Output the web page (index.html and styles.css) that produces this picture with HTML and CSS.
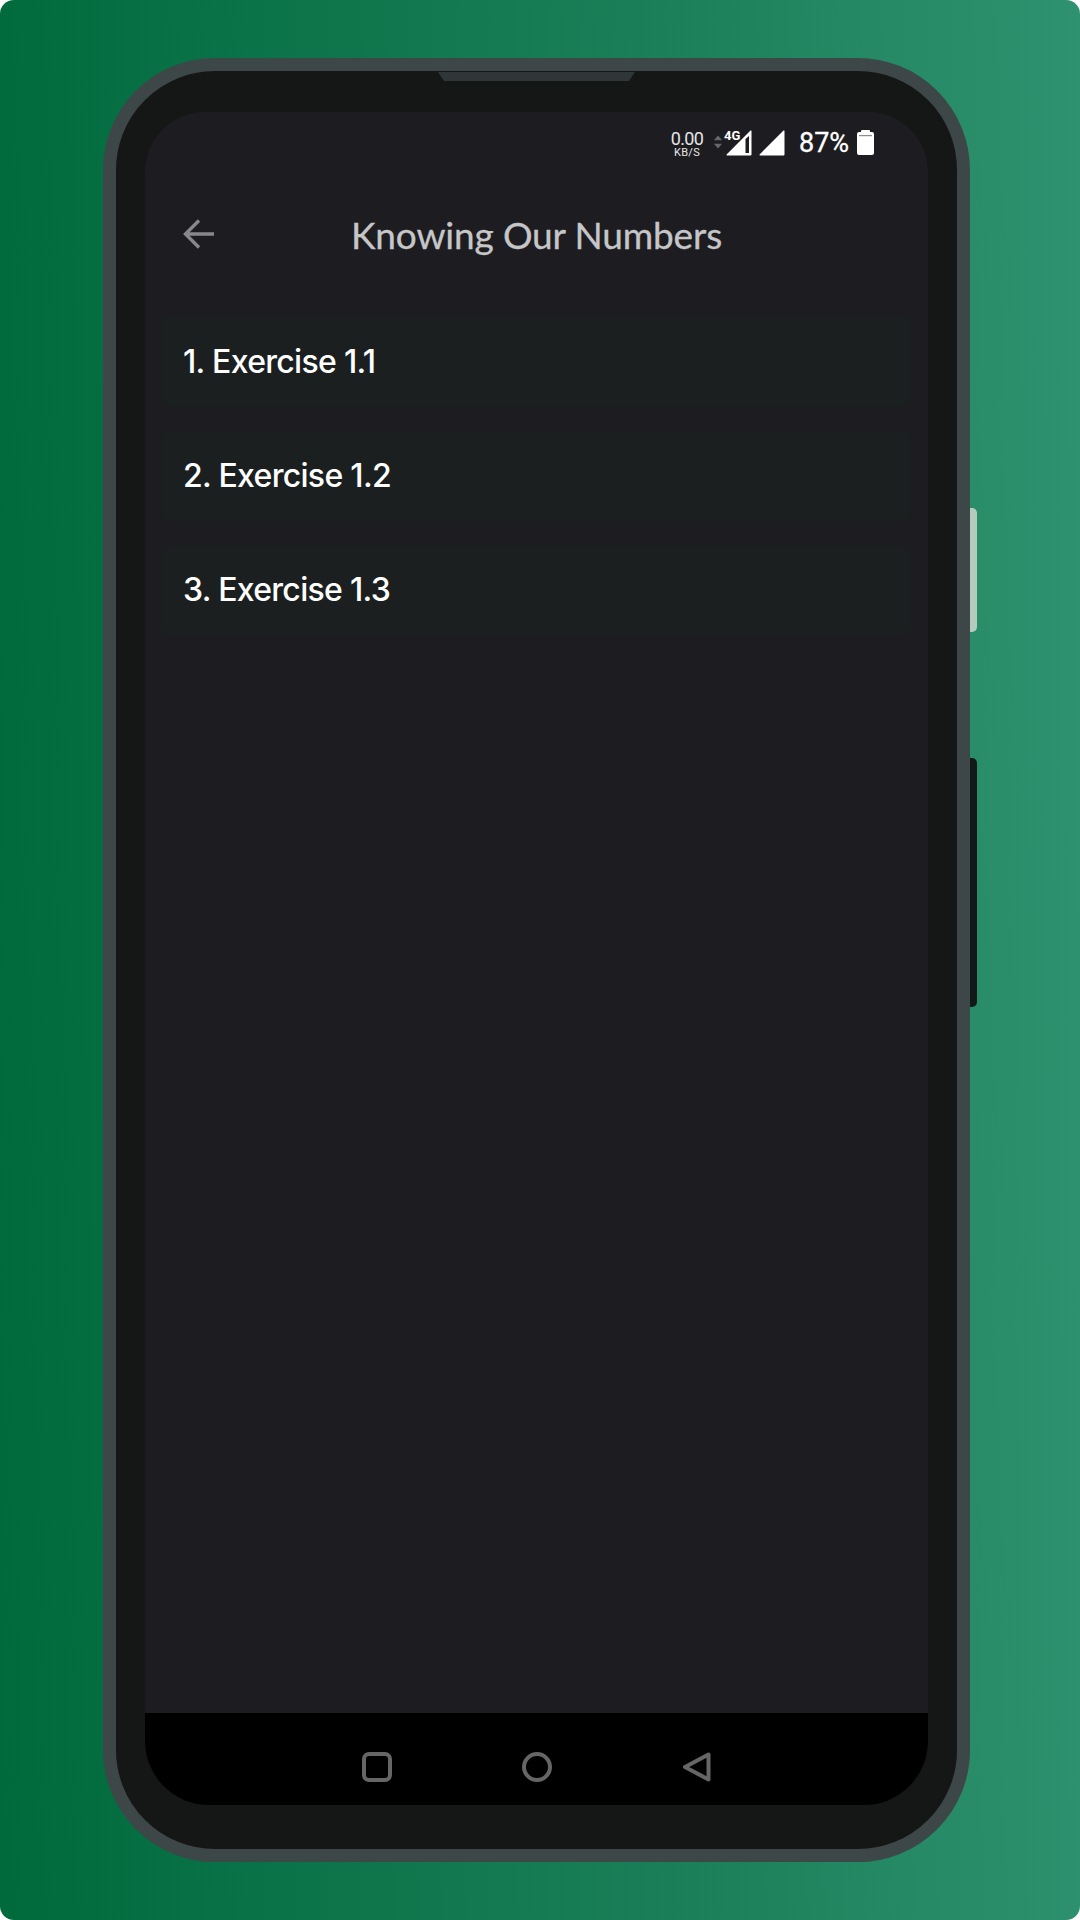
FILE: index.html
```html
<!DOCTYPE html>
<html lang="en">
<head>
<meta charset="utf-8">
<title>Knowing Our Numbers</title>
<link rel="stylesheet" href="styles.css">
</head>
<body>
<main class="stage">
  <div class="phone">
    <span class="notch"></span>
    <span class="btn btn-vol"></span>
    <span class="btn btn-power"></span>
    <div class="screen">
      <div class="status">
        <div class="speed"><span class="speed-val">0.00</span><span class="speed-unit">KB/S</span></div>
        <svg class="arrows" viewBox="0 0 8 12"><path d="M4 0.5 7.5 4.5H.5zM4 11.5 .5 7.5H7.5z" fill="#66676b"/></svg>
        <div class="sig-4g">
          <span class="tag-4g">4G</span>
          <svg class="sig" viewBox="0 0 26 26"><path fill-rule="evenodd" d="M25.5 1V24.5a1 1 0 0 1-1 1H1a.6.6 0 0 1-.4-1L24.5.6a.6.6 0 0 1 1 .4zM19.5 9V23H23V6z" fill="#fff"/></svg>
        </div>
        <svg class="sig sig-b" viewBox="0 0 26 26"><path d="M25.5 1V24.5a1 1 0 0 1-1 1H1a.6.6 0 0 1-.4-1L24.5.6a.6.6 0 0 1 1 .4z" fill="#fff"/></svg>
        <span class="pct">87%</span>
        <svg class="batt" viewBox="0 0 17 25"><path d="M5 0h7a1 1 0 0 1 1 1v1h2a2 2 0 0 1 2 2v19a2 2 0 0 1-2 2H2a2 2 0 0 1-2-2V4a2 2 0 0 1 2-2h2V1a1 1 0 0 1 1-1z" fill="#fff"/><rect x="2" y="5" width="13" height="1.2" fill="#8d8d90"/></svg>
      </div>
      <header class="bar">
        <svg class="back" viewBox="0 0 32 30"><path d="M31 15H3M16 1.5 2.5 15 16 28.5" fill="none" stroke="#88888c" stroke-width="3.4"/></svg>
        <h1 class="title">Knowing Our Numbers</h1>
      </header>
      <ul class="list">
        <li class="item">1. Exercise 1.1</li>
        <li class="item">2. Exercise 1.2</li>
        <li class="item">3. Exercise 1.3</li>
      </ul>
      <nav class="nav">
        <svg class="nav-ico" viewBox="0 0 30 30"><rect x="2" y="2" width="26" height="26" rx="5" fill="none" stroke="#666" stroke-width="4"/></svg>
        <svg class="nav-ico" viewBox="0 0 30 30"><circle cx="15" cy="15" r="13" fill="none" stroke="#666" stroke-width="4"/></svg>
        <svg class="nav-ico nav-back" viewBox="0 0 30 30"><path d="M26.5 2.5V27.5L3 15z" fill="none" stroke="#666" stroke-width="4" stroke-linejoin="round"/></svg>
      </nav>
    </div>
  </div>
</main>
</body>
</html>
```
FILE: styles.css
```css
* { box-sizing: border-box; }
html, body { margin: 0; padding: 0; background: #fff; }
.stage {
  width: 1080px; height: 1920px; overflow: hidden;
  padding: 58px 110px 58px 103px;
  border-radius: 14px;
  background: linear-gradient(89deg, #006a3c 0%, #1a7f58 60%, #2e9270 100%);
  font-family: "Lato", "Liberation Sans", sans-serif;
}
.phone {
  position: relative;
  width: 867px; height: 1804px;
  border: 13px solid #3d4748;
  border-radius: 112px;
  background: #141716;
  padding: 41px 29px 44px 29px;
}
.notch {
  position: absolute; top: 1px; left: 322px;
  width: 197px; height: 9px;
  background: #2e3637;
  clip-path: polygon(0 0, 100% 0, 97% 100%, 3% 100%);
  border-radius: 0 0 5px 5px;
}
.btn { position: absolute; right: -20px; width: 7px; border-radius: 0 5px 5px 0; }
.btn-vol { top: 437px; height: 124px; background: #b5cbbe; }
.btn-power { top: 687px; height: 249px; background: #111a18; }
.screen {
  height: 100%;
  display: flex; flex-direction: column;
  background: #1d1d21;
  border-radius: 60px 60px 64px 64px;
  overflow: hidden;
}
.status {
  display: flex; align-items: flex-start;
  height: 84px;
  padding: 18px 0 0 527px;
}
.speed { display: flex; flex-direction: column; align-items: center; width: 30px; color: #e6e6e6; font-family: "Roboto", sans-serif; }
.speed-val { font-size: 18px; line-height: 17px; letter-spacing: -.7px; }
.speed-unit { font-size: 11px; line-height: 12px; letter-spacing: .3px; }
.arrows { width: 10px; height: 14px; margin: 5px 0 0 11px; }
.sig-4g { position: relative; width: 26px; height: 26px; margin-left: 3px; }
.tag-4g { position: absolute; left: -2px; top: -1px; color: #fff; font: 700 13px/13px "Roboto", sans-serif; }
.sig { width: 26px; height: 26px; display: block; }
.sig-b { margin-left: 7px; }
.pct { margin-left: 14px; color: #fff; font: 400 27px/26px "Roboto", sans-serif; -webkit-text-stroke: .3px #fff; }
.batt { width: 17px; height: 25px; margin-left: 8px; }
.bar {
  position: relative;
  display: flex; align-items: center; justify-content: center;
  height: 71px; padding-top: 6px;
}
.back { position: absolute; left: 38px; top: 23px; width: 32px; height: 30px; }
.title { margin: 0; color: #c6c6c9; font-size: 37px; font-weight: 400; line-height: 65px; letter-spacing: -.15px; -webkit-text-stroke: .3px #c6c6c9; }
.list { list-style: none; margin: 50px 0 0; padding: 0; flex: 1; display: flex; flex-direction: column; }
.item {
  margin: 0 17px 24px 16px; padding: 0 0 0 22px;
  height: 90px; line-height: 90px;
  border-radius: 10px;
  background: #1c1f20;
  color: #fff; font-family: "Inter", "Liberation Sans", sans-serif; font-size: 32px; font-weight: 500; letter-spacing: -.7px;
}
.nav {
  height: 92px; background: #000;
  display: flex; justify-content: center; align-items: flex-start;
  gap: 130px; padding-top: 39px;
}
.nav-ico { width: 30px; height: 30px; display: block; }
```
